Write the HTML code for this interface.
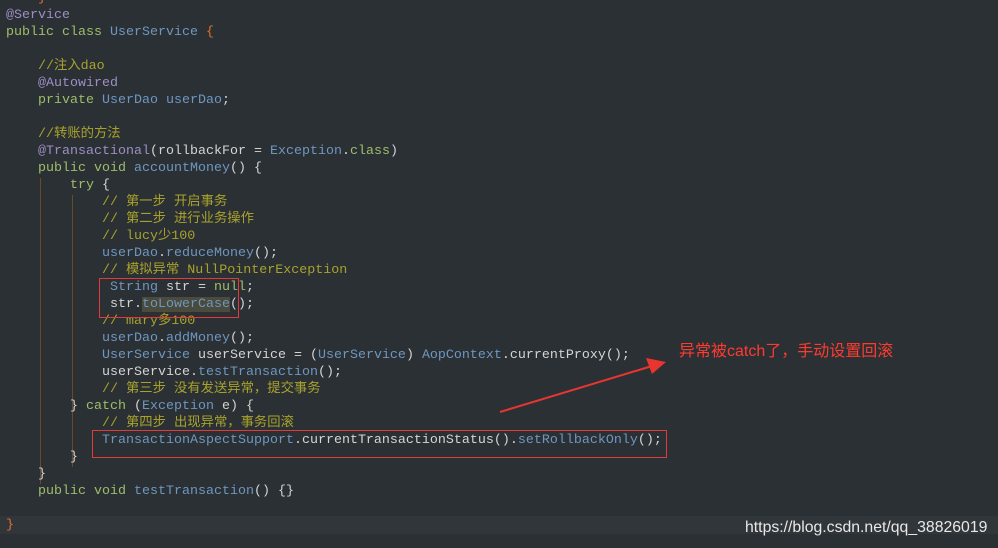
<!DOCTYPE html>
<html><head><meta charset="utf-8"><style>
body{margin:0;width:998px;height:548px;background:#2b3034;overflow:hidden;position:relative;font-family:"Liberation Mono","Noto Sans CJK SC",monospace;font-size:13.33px}
#c{position:absolute;left:0;top:2px;width:998px;height:540px}
.l{position:absolute;left:6px;height:17px;line-height:17px;white-space:pre;color:#d4d4d4}
.k{color:#9fbd6a}.c{color:#a8a22d}.t{color:#6f96bf}.a{color:#9d8ec4}.o{color:#e2702c}.m{color:#6f96bf}
.box{position:absolute;border:1px solid #e23a3a}
.g{position:absolute;width:1px;background:#6a4a2a}
</style></head><body>
<div style="position:absolute;left:0;top:516px;width:998px;height:18px;background:#31363a"></div>
<div class="g" style="left:40px;top:178px;height:306px"></div>
<div class="g" style="left:72px;top:195px;height:272px"></div>
<div id="c">
<div class="l" style="top:-12px">    <span class="o">}</span></div>
<div class="l a" style="top:5px">@Service</div>
<div class="l" style="top:22px"><span class="k">public class</span> <span class="t">UserService</span> <span class="o">{</span></div>
<div class="l" style="top:56px">    <span class="c">//注入dao</span></div>
<div class="l" style="top:73px">    <span class="a">@Autowired</span></div>
<div class="l" style="top:90px">    <span class="k">private</span> <span class="t">UserDao</span> <span class="t">userDao</span>;</div>
<div class="l" style="top:124px">    <span class="c">//转账的方法</span></div>
<div class="l" style="top:141px">    <span class="a">@Transactional</span>(rollbackFor = <span class="t">Exception</span>.<span class="k">class</span>)</div>
<div class="l" style="top:158px">    <span class="k">public void</span> <span class="m">accountMoney</span>() {</div>
<div class="l" style="top:175px">        <span class="k">try</span> {</div>
<div class="l" style="top:192px">            <span class="c">// 第一步 开启事务</span></div>
<div class="l" style="top:209px">            <span class="c">// 第二步 进行业务操作</span></div>
<div class="l" style="top:226px">            <span class="c">// lucy少100</span></div>
<div class="l" style="top:243px">            <span class="t">userDao</span>.<span class="m">reduceMoney</span>();</div>
<div class="l" style="top:260px">            <span class="c">// 模拟异常 NullPointerException</span></div>
<div class="l" style="top:277px">             <span class="t">String</span> str = <span class="k">null</span>;</div>
<div class="l" style="top:294px">             str.<span class="m" style="background:#4a4b3c">toLowerCase</span>();</div>
<div class="l" style="top:311px">            <span class="c">// mary多100</span></div>
<div class="l" style="top:328px">            <span class="t">userDao</span>.<span class="m">addMoney</span>();</div>
<div class="l" style="top:345px">            <span class="t">UserService</span> userService = (<span class="t">UserService</span>) <span class="t">AopContext</span>.currentProxy();</div>
<div class="l" style="top:362px">            userService.<span class="m">testTransaction</span>();</div>
<div class="l" style="top:379px">            <span class="c">// 第三步 没有发送异常，提交事务</span></div>
<div class="l" style="top:396px">        } <span class="k">catch</span> (<span class="t">Exception</span> e) {</div>
<div class="l" style="top:413px">            <span class="c">// 第四步 出现异常，事务回滚</span></div>
<div class="l" style="top:430px">            <span class="t">TransactionAspectSupport</span>.currentTransactionStatus().<span class="m">setRollbackOnly</span>();</div>
<div class="l" style="top:447px">        }</div>
<div class="l" style="top:464px">    }</div>
<div class="l" style="top:481px">    <span class="k">public void</span> <span class="m">testTransaction</span>() {}</div>
<div class="l" style="top:515px"><span class="o">}</span></div>
</div>
<div class="box" style="left:99px;top:278px;width:138px;height:38px"></div>
<div class="box" style="left:92px;top:430px;width:573px;height:26px"></div>
<svg style="position:absolute;left:0;top:0" width="998" height="548"><line x1="500" y1="412" x2="652" y2="366" stroke="#e8352f" stroke-width="2"/><polygon points="666,362 646,358 652,374" fill="#e8352f"/></svg>
<div style="position:absolute;left:679px;top:337px;color:#ff3b30;font:16px 'Liberation Sans','Noto Sans CJK SC',sans-serif">异常被catch了，手动设置回滚</div>
<div style="position:absolute;left:745px;top:519px;color:#e8e8e8;font:15.8px 'Liberation Sans',sans-serif">https://blog.csdn.net/qq_38826019</div>
</body></html>
